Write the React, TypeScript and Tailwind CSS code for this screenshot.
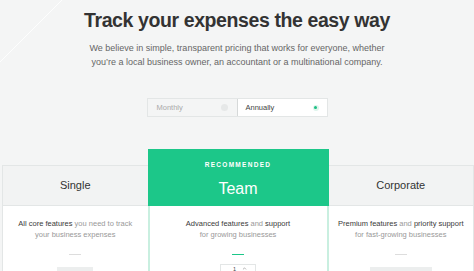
import { ChevronUp } from 'lucide-react';

const plans = [
  { name: 'Single', strong: 'All core features', rest: ' you need to track', line2: 'your business expenses' },
  { name: 'Corporate', strong: 'Premium features', mid: ' and ', strong2: 'priority support', line2: 'for fast-growing businesses' },
];

function SideCard({ plan, side }: { plan: (typeof plans)[number]; side: 'left' | 'right' }) {
  return (
    <div className={`flex-1 mt-[16px] flex flex-col border-[#e3e6e6] ${side === 'left' ? 'border-l ml-[2px]' : 'border-r mr-0'}`}>
      <div className="h-[41px] bg-[#f2f3f3] border-y border-[#e3e6e6] flex items-center justify-center">
        <span className="text-[11px] text-[#333]">{plan.name}</span>
      </div>
      <div className="bg-white flex-1 flex flex-col items-center pt-[12px]">
        <p className="text-[7.5px] leading-[11px] text-[#999] text-center">
          <span className="text-[#3a3a3a]">{plan.strong}</span>
          {plan.rest}
          {plan.mid}
          {plan.strong2 && <span className="text-[#3a3a3a]">{plan.strong2}</span>}
          <br />
          {plan.line2}
        </p>
        <div className="w-[12px] h-px bg-[#ddd] mt-[14px]" />
        <div className={`mt-[12px] h-[8px] bg-[#eceeee] ${side === 'left' ? 'w-[36px]' : 'w-[62px]'}`} />
      </div>
    </div>
  );
}

export default function App() {
  return (
    <div
      className="relative w-[474px] h-[271px] overflow-hidden bg-[#f4f5f5] flex flex-col"
      style={{ fontFamily: '"Liberation Sans", Arial, sans-serif' }}
    >
      <div className="h-[3px] bg-[#e9ebeb]" />
      <svg className="absolute left-0 top-0" width="70" height="70">
        <line x1="62" y1="0" x2="0" y2="62" stroke="#ffffff" strokeWidth="1" opacity="0.9" />
      </svg>

      <h1 className="mt-[8px] text-center text-[19.5px] leading-[24px] font-bold text-[#333] tracking-[-0.4px]">
        Track your expenses the easy way
      </h1>
      <p className="mt-[9px] text-center text-[9px] leading-[14px] text-[#666]">
        We believe in simple, transparent pricing that works for everyone, whether
        <br />
        you’re a local business owner, an accountant or a multinational company.
      </p>

      <div className="mt-[29px] flex justify-center">
        <div className="flex h-[19px] border border-[#e3e6e6]">
          <div className="w-[89px] flex items-center justify-between px-[9px] bg-[#f4f5f5]">
            <span className="text-[7.5px] text-[#aaa]">Monthly</span>
            <span className="w-[7px] h-[7px] rounded-full bg-[#e6e8e8]" />
          </div>
          <div className="w-[90px] flex items-center justify-between px-[8px] bg-white border-l border-[#d6d9d9]">
            <span className="text-[7.5px] text-[#444]">Annually</span>
            <span className="w-[6px] h-[6px] rounded-full bg-[#dff5ec] flex items-center justify-center">
              <span className="w-[3px] h-[3px] rounded-full bg-[#1dbf84]" />
            </span>
          </div>
        </div>
      </div>

      <div className="mt-[32px] flex flex-1">
        <SideCard plan={plans[0]} side="left" />
        <div className="w-[181px] flex flex-col">
          <div className="h-[57px] bg-[#1cc789] flex flex-col items-center text-white">
            <span className="mt-[11px] text-[6.5px] font-bold tracking-[1.3px]">RECOMMENDED</span>
            <span className="mt-[10px] text-[16px] leading-[18px]">Team</span>
          </div>
          <div className="bg-white flex-1 flex flex-col items-center pt-[12px] border-x-2 border-[#c9efe0]">
            <p className="text-[7.5px] leading-[11px] text-[#999] text-center">
              <span className="text-[#3a3a3a]">Advanced features</span> and <span className="text-[#3a3a3a]">support</span>
              <br />
              for growing businesses
            </p>
            <div className="w-[12px] h-px bg-[#1cc789] mt-[14px]" />
            <div className="mt-[9px] w-[36px] h-[9px] border border-[#e3e6e6] flex items-center justify-end pr-[8px] gap-[6px]">
              <span className="text-[5.5px] leading-[6px] text-[#444]">1</span>
              <ChevronUp className="w-[5px] h-[5px] text-[#888]" strokeWidth={3} />
            </div>
          </div>
        </div>
        <SideCard plan={plans[1]} side="right" />
      </div>
    </div>
  );
}
